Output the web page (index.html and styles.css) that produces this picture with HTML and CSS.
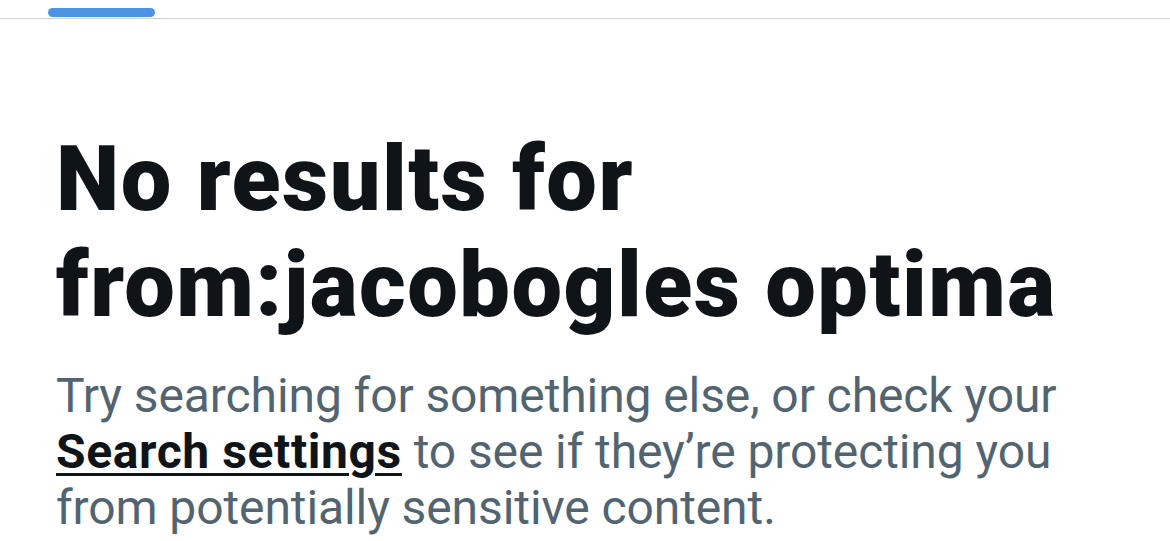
FILE: index.html
```html
<!DOCTYPE html>
<html>
<head>
<meta charset="utf-8">
<link rel="stylesheet" href="styles.css">
</head>
<body>
<div class="tabs">
  <div class="tab"><div class="indicator"></div></div>
</div>
<main class="empty">
  <h1 class="title">No results for<br>from:jacobogles optima</h1>
  <p class="hint">Try searching for something else, or check your <a class="link" href="#">Search settings</a> to see if they’re protecting you from potentially sensitive content.</p>
</main>
</body>
</html>
```
FILE: styles.css
```css
html, body { margin: 0; padding: 0; background: #fff; }
body { width: 1170px; height: 541px; overflow: hidden; font-family: Roboto, "Liberation Sans", sans-serif; }
.tabs { height: 18px; border-bottom: 1px solid #cdd2d5; display: flex; padding-left: 48px; align-items: flex-end; }
.tab { width: 107px; display: flex; }
.indicator { width: 107px; height: 9px; border-radius: 5px; background: #4c94e2; margin-bottom: 1px; }
.empty { padding: 108px 0 0 56px; }
.title { margin: 0; font-size: 90px; line-height: 106px; font-weight: 900; color: #0f1419; letter-spacing: 1.5px; }
.hint { margin: 29px 0 0; max-width: 1030px; font-size: 48px; line-height: 56px; color: #536471; font-weight: 400; letter-spacing: -0.1px; }
.link { color: #0f1419; font-weight: 700; letter-spacing: 0.6px; text-decoration: underline; text-decoration-thickness: 3px; text-underline-offset: 5px; }
```
